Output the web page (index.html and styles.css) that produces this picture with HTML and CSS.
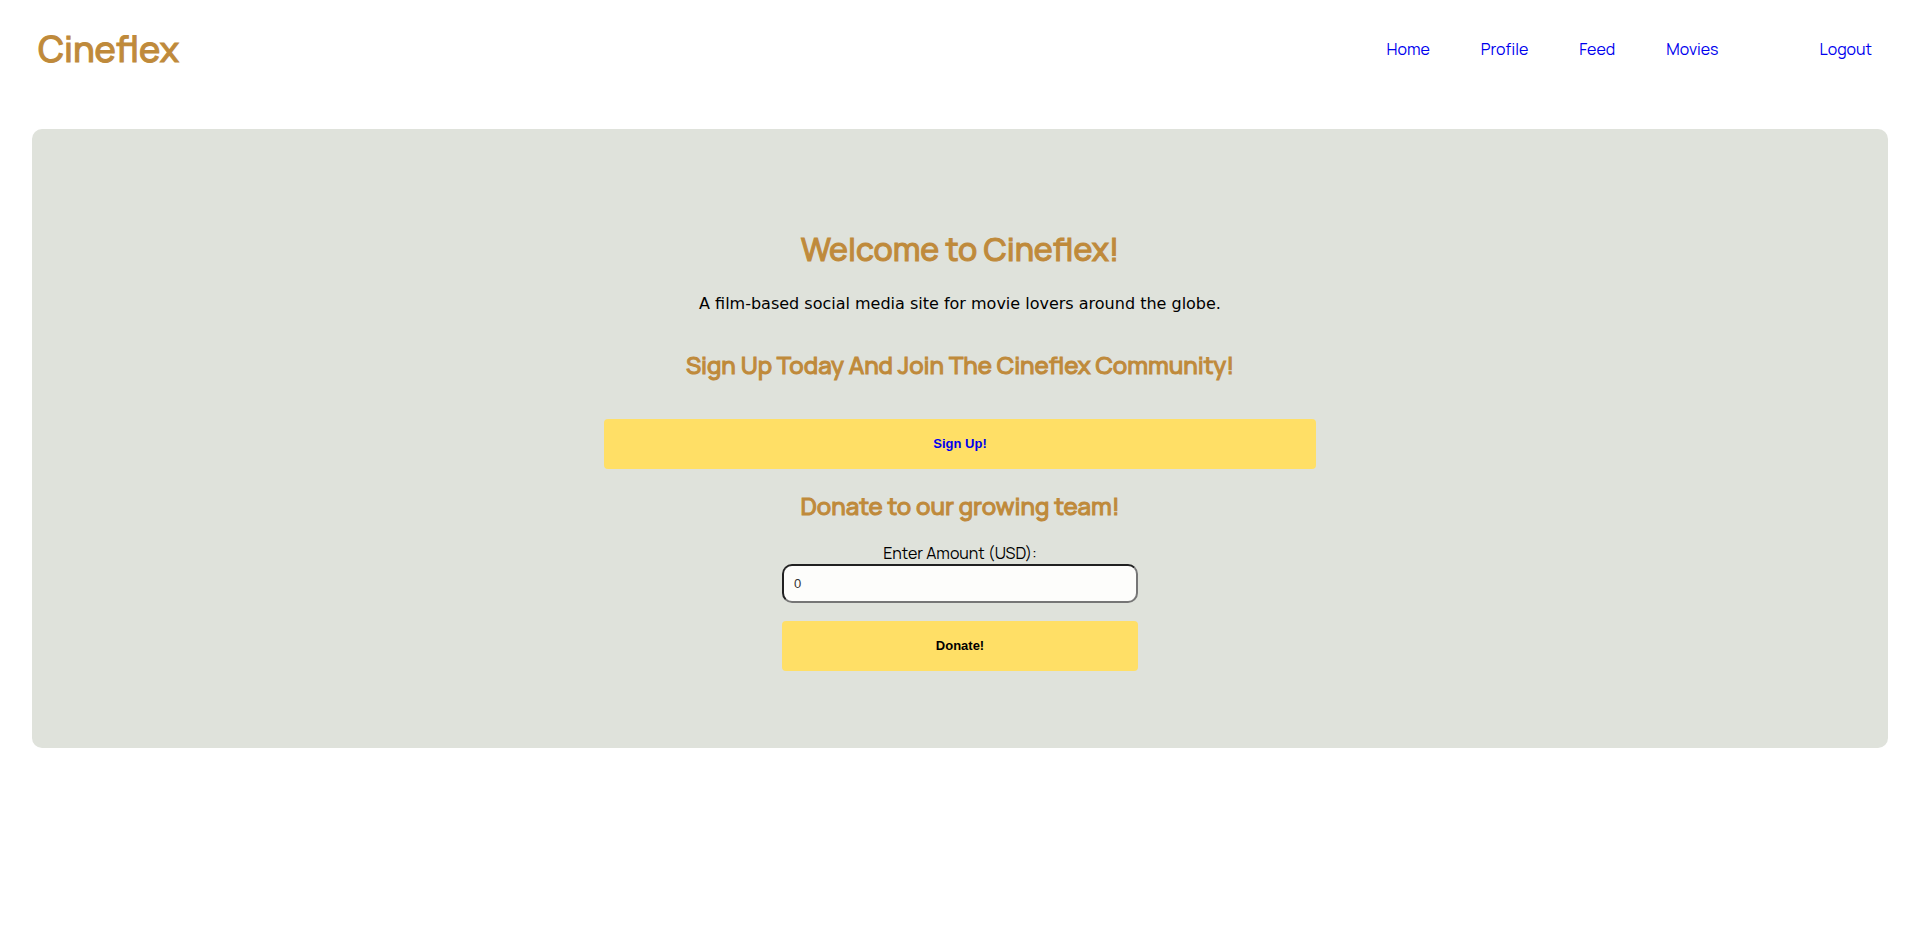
FILE: index.html
```html
<!DOCTYPE html>
<html lang="en">
<head>
<meta charset="utf-8">
<meta name="viewport" content="width=device-width, initial-scale=1">
<title>Cineflex</title>
<link rel="stylesheet" href="styles.css">
</head>
<body>
<header class="site-header">
  <h1 class="brand">Cineflex</h1>
  <nav class="site-nav">
    <a href="#">Home</a>
    <a href="#">Profile</a>
    <a href="#">Feed</a>
    <a href="#">Movies</a>
    <a class="logout" href="#">Logout</a>
  </nav>
</header>
<main class="hero">
  <h2 class="welcome">Welcome to Cineflex!</h2>
  <p class="tagline">A film-based social media site for movie lovers around the globe.</p>
  <h3 class="subtitle">Sign Up Today And Join The Cineflex Community!</h3>
  <a class="button signup" href="#">Sign Up!</a>
  <h3 class="subtitle donate-title">Donate to our growing team!</h3>
  <form class="donate">
    <label for="amount">Enter Amount (USD):</label>
    <input class="amount" id="amount" type="number" value="0">
    <button class="button" type="button">Donate!</button>
  </form>
</main>
</body>
</html>
```
FILE: styles.css
```css
* {
  box-sizing: border-box;
}

body {
  margin: 0;
  background: #fff;
  color: #000;
  font: 16px/22px Manrope, Inter, sans-serif;
}

h1, h2, h3, p {
  margin: 0;
}

h1, h2, h3 {
  color: #bf8a3b;
  font-weight: 500;
  -webkit-text-stroke: 1px #bf8a3b;
}

a {
  color: #00e;
  text-decoration: none;
}

.site-header {
  display: flex;
  align-items: center;
  justify-content: space-between;
  padding: 24px 48px 24px 38px;
}

.brand {
  font-size: 36px;
  line-height: 50px;
}

.site-nav {
  display: flex;
  gap: 51px;
}

.logout {
  margin-left: 50px;
}

.hero {
  display: flex;
  flex-direction: column;
  align-items: center;
  margin: 31px 32px 32px;
  padding: 96px 38px 77px;
  border-radius: 10px;
  background: #dfe2db;
  text-align: center;
}

.welcome {
  font-size: 32px;
  line-height: 48px;
}

.tagline {
  margin-top: 19px;
  font-family: Verdana, "DejaVu Sans", sans-serif;
  line-height: 24px;
}

.subtitle {
  margin-top: 33px;
  font-size: 24px;
  line-height: 32px;
}

.button {
  display: block;
  width: 100%;
  padding: 15px;
  border: 0;
  border-radius: 4px;
  background: #ffdf66;
  color: #000;
  font: bold 13px/20px Arial, "Liberation Sans", sans-serif;
  text-align: center;
}

.signup {
  width: 40%;
  margin-top: 38px;
  color: #00e;
}

.donate-title {
  margin-top: 21px;
}

.donate {
  width: 20%;
  margin-top: 20px;
}

.donate label {
  display: block;
}

.amount {
  display: block;
  width: 100%;
  height: 39px;
  margin-bottom: 18px;
  padding: 10px;
  border: 2px inset #767676;
  border-radius: 10px;
  background: #fdfdfb;
  color: #333;
  font: 13px Arial, "Liberation Sans", sans-serif;
}
```
